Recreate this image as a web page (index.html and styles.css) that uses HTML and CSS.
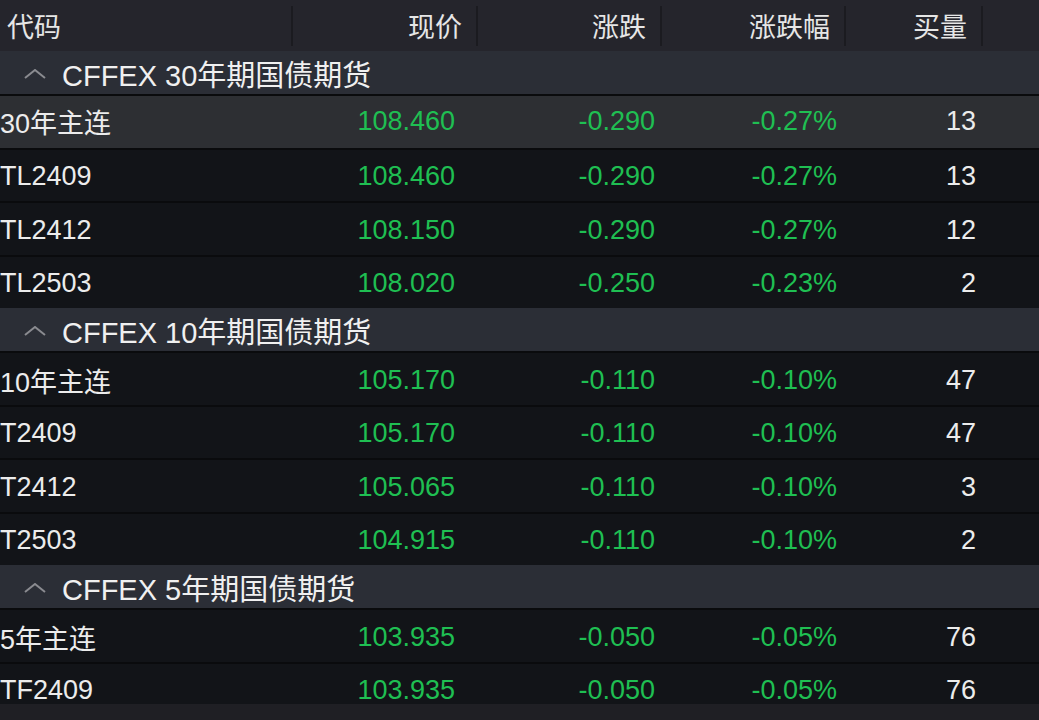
FILE: index.html
```html
<!DOCTYPE html>
<html lang="zh-CN">
<head>
<meta charset="utf-8">
<title>国债期货</title>
<link rel="stylesheet" href="styles.css">
</head>
<body>
<div class="board">
  <div class="head">
    <div class="hc first">代码</div>
    <div class="hc">现价</div>
    <div class="hc">涨跌</div>
    <div class="hc">涨跌幅</div>
    <div class="hc">买量</div>
    <div class="hc last"></div>
  </div>

  <div class="group">
    <svg class="chev" width="22" height="10" viewBox="0 0 22 10"><polyline points="1,9 11,1 21,9" fill="none" stroke="#8a8b90" stroke-width="2"/></svg>
    <span>CFFEX 30年期国债期货</span>
  </div>
  <div class="row sel"><div class="c code">30年主连</div><div class="c price">108.460</div><div class="c chg">-0.290</div><div class="c pct">-0.27%</div><div class="c vol">13</div></div>
  <div class="row"><div class="c code">TL2409</div><div class="c price">108.460</div><div class="c chg">-0.290</div><div class="c pct">-0.27%</div><div class="c vol">13</div></div>
  <div class="row"><div class="c code">TL2412</div><div class="c price">108.150</div><div class="c chg">-0.290</div><div class="c pct">-0.27%</div><div class="c vol">12</div></div>
  <div class="row"><div class="c code">TL2503</div><div class="c price">108.020</div><div class="c chg">-0.250</div><div class="c pct">-0.23%</div><div class="c vol">2</div></div>

  <div class="group">
    <svg class="chev" width="22" height="10" viewBox="0 0 22 10"><polyline points="1,9 11,1 21,9" fill="none" stroke="#8a8b90" stroke-width="2"/></svg>
    <span>CFFEX 10年期国债期货</span>
  </div>
  <div class="row"><div class="c code">10年主连</div><div class="c price">105.170</div><div class="c chg">-0.110</div><div class="c pct">-0.10%</div><div class="c vol">47</div></div>
  <div class="row"><div class="c code">T2409</div><div class="c price">105.170</div><div class="c chg">-0.110</div><div class="c pct">-0.10%</div><div class="c vol">47</div></div>
  <div class="row"><div class="c code">T2412</div><div class="c price">105.065</div><div class="c chg">-0.110</div><div class="c pct">-0.10%</div><div class="c vol">3</div></div>
  <div class="row"><div class="c code">T2503</div><div class="c price">104.915</div><div class="c chg">-0.110</div><div class="c pct">-0.10%</div><div class="c vol">2</div></div>

  <div class="group">
    <svg class="chev" width="22" height="10" viewBox="0 0 22 10"><polyline points="1,9 11,1 21,9" fill="none" stroke="#8a8b90" stroke-width="2"/></svg>
    <span>CFFEX 5年期国债期货</span>
  </div>
  <div class="row"><div class="c code">5年主连</div><div class="c price">103.935</div><div class="c chg">-0.050</div><div class="c pct">-0.05%</div><div class="c vol">76</div></div>
  <div class="row"><div class="c code">TF2409</div><div class="c price">103.935</div><div class="c chg">-0.050</div><div class="c pct">-0.05%</div><div class="c vol">76</div></div>
</div>
</body>
</html>
```

FILE: styles.css
```css
* { box-sizing: border-box; }
html, body { margin: 0; padding: 0; }
body {
  background: #1f1f24;
  width: 1039px;
  height: 720px;
  overflow: hidden;
  font-family: "Liberation Sans", "Noto Sans CJK SC", sans-serif;
  color: #ebebeb;
}
.board {
  height: 704px;
  overflow: hidden;
  background: #121418;
}
.head {
  display: grid;
  grid-template-columns: 293px 185px 184px 184px 137px 1fr;
  height: 51px;
  background: #25252c;
  align-items: center;
}
.hc {
  height: 40px;
  display: flex;
  align-items: center;
  justify-content: flex-end;
  padding-right: 14px;
  border-right: 2px solid #1b1b20;
  font-size: 27px;
  color: #e6e6e6;
  font-family: "Noto Sans CJK SC", sans-serif;
}
.hc.first { justify-content: flex-start; padding-left: 7px; }
.hc.last { border-right: none; }
.group {
  height: 43px;
  background: #2b2e36;
  display: flex;
  align-items: center;
  font-size: 29px;
  color: #f0f0f0;
}
.chev { margin-left: 24px; margin-right: 16px; margin-top: 2px; }
.row {
  display: grid;
  grid-template-columns: 293px 185px 184px 184px 137px 1fr;
  height: 53.5px;
  border-top: 2px solid #0a0b0d;
  align-items: center;
  font-size: 27px;
  padding-top: 3px;
}
.row.sel { background: #2d2f33; padding-top: 0; }
.c { text-align: right; white-space: nowrap; }
.code { text-align: left; padding-left: 0; color: #ececec; }
.price { color: #1fbf52; padding-right: 23px; }
.chg { color: #1fbf52; padding-right: 7px; }
.pct { color: #1fbf52; padding-right: 9px; }
.vol { color: #ececec; padding-right: 7px; }
```
